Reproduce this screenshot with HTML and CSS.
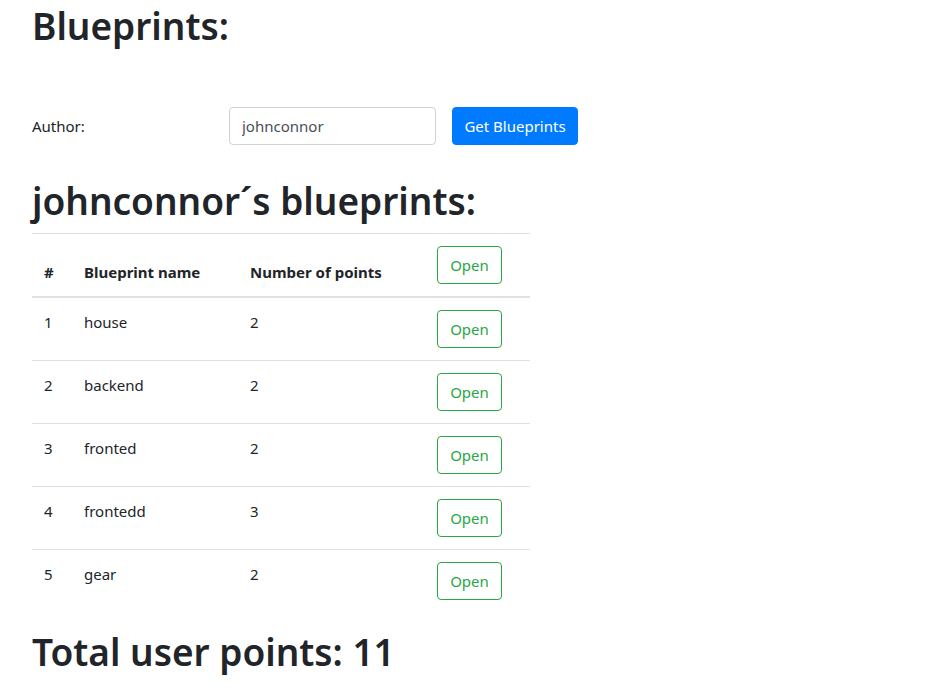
FILE: index.html
```html
<!DOCTYPE html>
<html lang="en">
<head>
<meta charset="utf-8">
<title>Blueprints</title>
<link rel="stylesheet" href="styles.css">
</head>
<body>
<div class="page">
  <h1 class="title">Blueprints:</h1>
  <div class="author-row">
    <label class="author-label" for="author">Author:</label>
    <input class="author-input" id="author" type="text" value="johnconnor">
    <button class="btn btn-primary" type="button">Get Blueprints</button>
  </div>
  <h1 class="subtitle">johnconnor´s blueprints:</h1>
  <table class="bp-table">
    <colgroup>
      <col class="c-num"><col class="c-name"><col class="c-points"><col class="c-open">
    </colgroup>
    <thead>
      <tr>
        <th>#</th>
        <th>Blueprint name</th>
        <th>Number of points</th>
        <th><button class="btn btn-outline" type="button">Open</button></th>
      </tr>
    </thead>
    <tbody>
      <tr><td>1</td><td>house</td><td>2</td><td><button class="btn btn-outline" type="button">Open</button></td></tr>
      <tr><td>2</td><td>backend</td><td>2</td><td><button class="btn btn-outline" type="button">Open</button></td></tr>
      <tr><td>3</td><td>fronted</td><td>2</td><td><button class="btn btn-outline" type="button">Open</button></td></tr>
      <tr><td>4</td><td>frontedd</td><td>3</td><td><button class="btn btn-outline" type="button">Open</button></td></tr>
      <tr><td>5</td><td>gear</td><td>2</td><td><button class="btn btn-outline" type="button">Open</button></td></tr>
    </tbody>
  </table>
  <h1 class="total">Total user points: 11</h1>
</div>
</body>
</html>
```
FILE: styles.css
```css
* { box-sizing: border-box; }
html, body {
  margin: 0;
  background: #fff;
}
body {
  font-family: "Noto Sans", "Open Sans", sans-serif;
  font-size: 15px;
  line-height: 24px;
  color: #212529;
}
.page {
  padding: 2px 32px 0;
}
h1 {
  font-size: 37px;
  font-weight: 600;
  line-height: 48px;
  margin: 0 0 8px 0;
  color: #212529;
}
.title { margin-bottom: 57px; }
.author-row {
  display: flex;
  align-items: center;
  height: 38px;
}
.author-label {
  width: 197px;
  font-size: 15px;
}
.author-input {
  width: 207px;
  height: 38px;
  border: 1px solid #ced4da;
  border-radius: 4px;
  padding: 6px 12px;
  font-family: inherit;
  font-size: 15px;
  color: #495057;
  margin-right: 16px;
  outline: none;
}
.btn {
  font-family: inherit;
  font-size: 15px;
  line-height: 24px;
  height: 38px;
  padding: 6px 12px;
  border-radius: 4px;
  border: 1px solid transparent;
  background: transparent;
  cursor: pointer;
  white-space: nowrap;
}
.btn-primary {
  width: 126px;
  padding: 6px 8px;
  background: #007bff;
  border-color: #007bff;
  color: #fff;
}
.btn-outline {
  width: 65px;
  border-color: #28a745;
  color: #28a745;
}
.subtitle {
  margin-top: 32px;
}
.bp-table {
  width: 498px;
  border-collapse: collapse;
  table-layout: fixed;
  margin-bottom: 16px;
}
.c-num { width: 40px; }
.c-name { width: 166px; }
.c-points { width: 187px; }
.c-open { width: 105px; }
.bp-table th, .bp-table td {
  padding: 12px;
  text-align: left;
  border-top: 1px solid #dee2e6;
}
.bp-table th {
  vertical-align: bottom;
  font-weight: 700;
  border-bottom: 2px solid #dee2e6;
}
.bp-table td {
  vertical-align: top;
}
.bp-table tbody tr:first-child td { border-top: 0; }
.total { margin: 0; }
```
